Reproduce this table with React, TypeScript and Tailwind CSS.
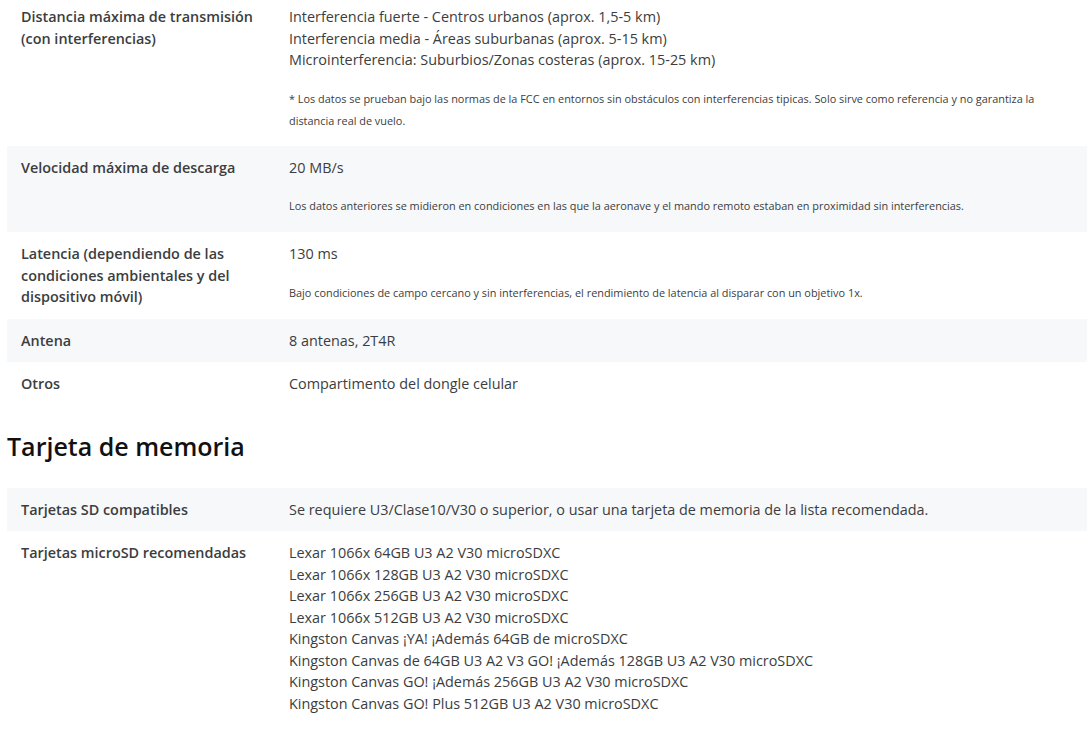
const font = { fontFamily: '"Open Sans", "Noto Sans", Arial, sans-serif' };

type Spec = { label: string; lines: string[]; note?: string[]; first?: boolean };

const transmission: Spec[] = [
  {
    label: 'Distancia máxima de transmisión (con interferencias)',
    lines: [
      'Interferencia fuerte - Centros urbanos (aprox. 1,5-5 km)',
      'Interferencia media - Áreas suburbanas (aprox. 5-15 km)',
      'Microinterferencia: Suburbios/Zonas costeras (aprox. 15-25 km)',
    ],
    note: [
      '* Los datos se prueban bajo las normas de la FCC en entornos sin obstáculos con interferencias tipicas. Solo sirve como referencia y no garantiza la distancia real de vuelo.',
    ],
    first: true,
  },
  {
    label: 'Velocidad máxima de descarga',
    lines: ['20 MB/s'],
    note: [
      'Los datos anteriores se midieron en condiciones en las que la aeronave y el mando remoto estaban en proximidad sin interferencias.',
    ],
  },
  {
    label: 'Latencia (dependiendo de las condiciones ambientales y del dispositivo móvil)',
    lines: ['130 ms'],
    note: ['Bajo condiciones de campo cercano y sin interferencias, el rendimiento de latencia al disparar con un objetivo 1x.'],
  },
  { label: 'Antena', lines: ['8 antenas, 2T4R'] },
  { label: 'Otros', lines: ['Compartimento del dongle celular'] },
];

const memory: Spec[] = [
  {
    label: 'Tarjetas SD compatibles',
    lines: ['Se requiere U3/Clase10/V30 o superior, o usar una tarjeta de memoria de la lista recomendada.'],
  },
  {
    label: 'Tarjetas microSD recomendadas',
    lines: [
      'Lexar 1066x 64GB U3 A2 V30 microSDXC',
      'Lexar 1066x 128GB U3 A2 V30 microSDXC',
      'Lexar 1066x 256GB U3 A2 V30 microSDXC',
      'Lexar 1066x 512GB U3 A2 V30 microSDXC',
      'Kingston Canvas ¡YA! ¡Además 64GB de microSDXC',
      'Kingston Canvas de 64GB U3 A2 V3 GO! ¡Además 128GB U3 A2 V30 microSDXC',
      'Kingston Canvas GO! ¡Además 256GB U3 A2 V30 microSDXC',
      'Kingston Canvas GO! Plus 512GB U3 A2 V30 microSDXC',
    ],
  },
];

function Row({ spec, grey }: { spec: Spec; grey: boolean }) {
  return (
    <div
      className={`grid grid-cols-[268px_1fr] px-[14px] pb-[11px] ${spec.first ? 'pt-[6px]' : 'pt-[11px]'} ${
        grey ? 'bg-[#f7f8fa]' : 'bg-white'
      }`}>
      <div className="text-[14.4px] leading-[21.5px] font-semibold text-[#3b3d40] pr-6">{spec.label}</div>
      <div className="text-[14.4px] leading-[21.5px] text-[#3b3d40]">
        {spec.lines.map((l, i) => (
          <div key={i}>{l}</div>
        ))}
        {spec.note && (
          <div className={`mt-[17px] ${spec.first ? 'mb-[3px]' : 'mb-[4px]'} text-[10.9px] leading-[22px] text-[#3b3d40]`}>
            {spec.note.map((n, i) => (
              <div key={i}>{n}</div>
            ))}
          </div>
        )}
      </div>
    </div>
  );
}

export default function App() {
  return (
    <div className="min-h-screen bg-white pl-[7px] pr-[4px]" style={font}>
      <div className="w-[1080px]">
        {transmission.map((s, i) => (
          <Row key={i} spec={s} grey={i % 2 === 1} />
        ))}
      </div>

      <h2 className="mt-[22px] mb-[24px] text-[25px] leading-[36px] font-semibold text-[#111]">Tarjeta de memoria</h2>

      <div className="w-[1080px]">
        {memory.map((s, i) => (
          <Row key={i} spec={s} grey={i % 2 === 0} />
        ))}
      </div>
    </div>
  );
}
